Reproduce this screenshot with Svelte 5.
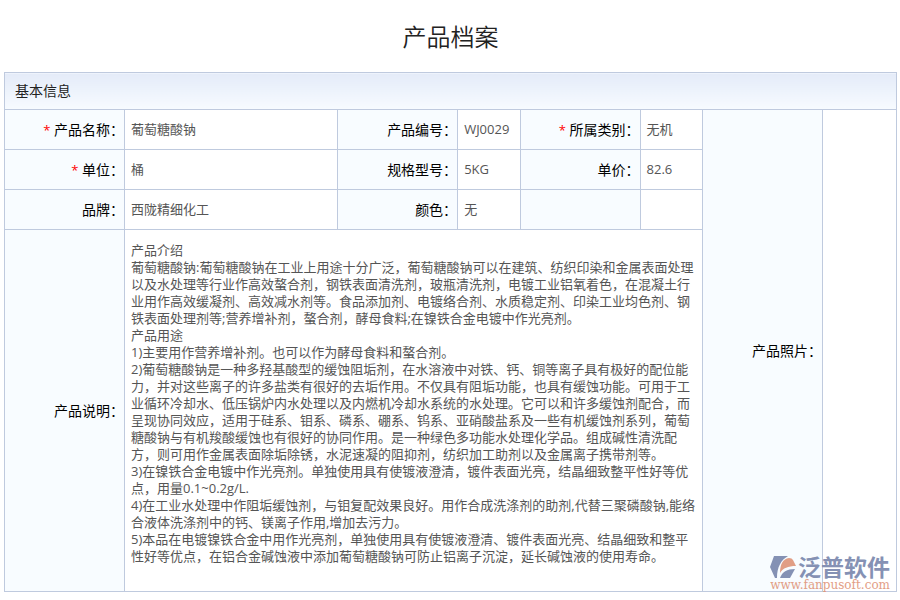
<script>
	const rows = [
		[
			{ label: '产品名称', value: '葡萄糖酸钠', required: true },
			{ label: '产品编号', value: 'WJ0029' },
			{ label: '所属类别', value: '无机', required: true },
		],
		[
			{ label: '单位', value: '桶', required: true },
			{ label: '规格型号', value: '5KG' },
			{ label: '单价', value: '82.6' },
		],
		[
			{ label: '品牌', value: '西陇精细化工' },
			{ label: '颜色', value: '无' },
			{ label: '', value: '' },
		],
	];

	const description = [
		'产品介绍',
		'葡萄糖酸钠:葡萄糖酸钠在工业上用途十分广泛，葡萄糖酸钠可以在建筑、纺织印染和金属表面处理以及水处理等行业作高效螯合剂，钢铁表面清洗剂，玻瓶清洗剂，电镀工业铝氧着色，在混凝土行业用作高效缓凝剂、高效减水剂等。食品添加剂、电镀络合剂、水质稳定剂、印染工业均色剂、钢铁表面处理剂等;营养增补剂，螯合剂，酵母食料;在镍铁合金电镀中作光亮剂。',
		'产品用途',
		'1)主要用作营养增补剂。也可以作为酵母食料和螯合剂。',
		'2)葡萄糖酸钠是一种多羟基酸型的缓蚀阻垢剂，在水溶液中对铁、钙、铜等离子具有极好的配位能力，并对这些离子的许多盐类有很好的去垢作用。不仅具有阻垢功能，也具有缓蚀功能。可用于工业循环冷却水、低压锅炉内水处理以及内燃机冷却水系统的水处理。它可以和许多缓蚀剂配合，而呈现协同效应，适用于硅系、钼系、磷系、硼系、钨系、亚硝酸盐系及一些有机缓蚀剂系列，葡萄糖酸钠与有机羧酸缓蚀也有很好的协同作用。是一种绿色多功能水处理化学品。组成碱性清洗配方，则可用作金属表面除垢除锈，水泥速凝的阻抑剂，纺织加工助剂以及金属离子携带剂等。',
		'3)在镍铁合金电镀中作光亮剂。单独使用具有使镀液澄清，镀件表面光亮，结晶细致整平性好等优点，用量0.1~0.2g/L.',
		'4)在工业水处理中作阻垢缓蚀剂，与钼复配效果良好。用作合成洗涤剂的助剂,代替三聚磷酸钠,能络合液体洗涤剂中的钙、镁离子作用,增加去污力。',
		'5)本品在电镀镍铁合金中用作光亮剂，单独使用具有使镀液澄清、镀件表面光亮、结晶细致和整平性好等优点，在铝合金碱蚀液中添加葡萄糖酸钠可防止铝离子沉淀，延长碱蚀液的使用寿命。',
	];
</script>

<main class="page" lang="zh-CN">
	<h1>产品档案</h1>

	<div class="sheet">
		<table>
			<colgroup>
				<col class="label-col" />
				<col />
				<col class="label-col" />
				<col class="value-col" />
				<col class="label-col" />
				<col class="value-col" />
				<col class="label-col" />
				<col class="photo-col" />
			</colgroup>
			<thead>
				<tr>
					<th class="section" colspan="8">基本信息</th>
				</tr>
			</thead>
			<tbody>
				{#each rows as row, i}
					<tr class="field-row">
						{#each row as field}
							<th scope="row">
								{#if field.required}<span class="required">*</span>{/if}
								{#if field.label}{field.label}：{/if}
							</th>
							<td>{field.value}</td>
						{/each}
						{#if i === 0}
							<th scope="row" rowspan="4">产品照片：</th>
							<td rowspan="4"></td>
						{/if}
					</tr>
				{/each}
				<tr>
					<th scope="row">产品说明：</th>
					<td class="description" colspan="5">
						{#each description as text}
							<p>{text}</p>
						{/each}
					</td>
				</tr>
			</tbody>
		</table>

		<div class="watermark">
			<div class="brand">
				<svg viewBox="0 0 26 23" width="26" height="23" aria-hidden="true">
					<path d="M4 0H18C11 4 7 11 7 22H5L0 11Z" fill="#7886ac" />
					<path d="M10 17C10 8 13 3 19 2Q22 2 23 4L26 10C18 10 13 12 10 17Z" fill="#df9478" />
					<path d="M10 22C12 16 17 13 25 13L20 22Z" fill="#7886ac" />
				</svg>
				<span>泛普软件</span>
			</div>
			<div class="site">www.fanpusoft.com</div>
		</div>
	</div>
</main>

<style>
	:global(body) {
		margin: 0;
		background: #fff;
	}

	.page {
		padding: 0 3px 8px 4px;
		font-family: 'Open Sans', 'Noto Sans CJK SC', sans-serif;
		color: #555;
	}

	h1 {
		margin: 0;
		padding: 19px 0 17px;
		font-size: 24px;
		line-height: 36px;
		font-weight: 350;
		text-align: center;
		color: #222;
	}

	.sheet {
		position: relative;
	}

	table {
		width: 100%;
		table-layout: fixed;
		border-collapse: collapse;
		font-size: 13px;
		line-height: 17px;
	}

	.label-col { width: 120px; }
	.value-col { width: 7%; }
	.photo-col { width: 74px; }

	th,
	td {
		padding: 0 6px;
		border: 1px solid #bfcade;
		text-align: left;
		font-weight: 400;
	}

	th {
		padding: 0;
		background: #f8fcff;
		font-size: 14px;
		text-align: right;
		color: #000;
	}

	.section {
		height: 34px;
		padding: 0 10px 2px;
		background: linear-gradient(#e4ebf8, #f7fbff);
		text-align: left;
		color: #222;
	}

	.field-row {
		height: 40px;
	}

	.required {
		color: #f00;
		font-size: 13px;
	}

	.description {
		padding: 12px 6px 26px;
		vertical-align: top;
	}

	p {
		margin: 0;
	}

	.watermark {
		position: absolute;
		right: 7px;
		bottom: 1px;
		opacity: 0.9;
	}

	.brand {
		display: flex;
		align-items: center;
		justify-content: space-between;
		font-size: 23px;
		line-height: 24px;
		font-weight: 700;
		color: #7886ac;
	}

	.site {
		font-family: 'DejaVu Serif', serif;
		font-size: 12px;
		line-height: 12px;
		color: #df9478;
	}
</style>
